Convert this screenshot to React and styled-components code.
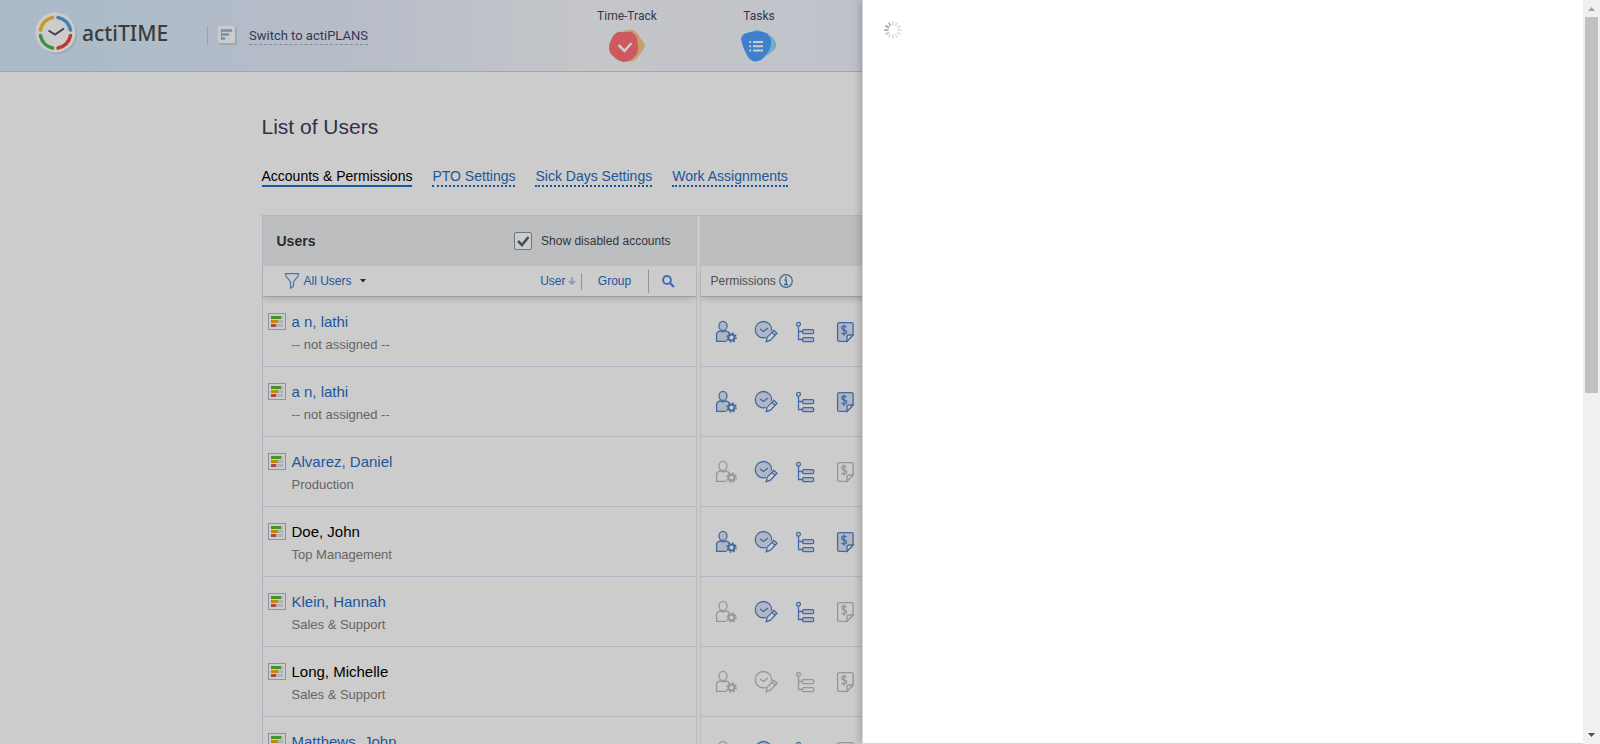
import React from "react";
import styled, { createGlobalStyle, css } from "styled-components";

const Global = createGlobalStyle`
  * { box-sizing: border-box; }
  body { margin: 0; background: #fff; font-family: "Liberation Sans", Arial, sans-serif; }
  button { font: inherit; background: none; border: 0; padding: 0; cursor: pointer; }
  a { text-decoration: none; }
`;

const Shell = styled.div`
  display: flex;
  height: 100vh;
  overflow: hidden;
`;

const Viewport = styled.div`
  position: relative;
  flex: 1;
  min-width: 0;
  overflow: hidden;
`;

const Header = styled.header`
  display: flex;
  height: 72px;
  padding-left: 35px;
  border-bottom: 1px solid #bdd3ea;
  background: linear-gradient(90deg, #d4e9fc 0, #e8eefa 400px, #f6f8fc 590px, #f0f3fe 863px);
`;

const Logo = styled.a`
  display: flex;
  align-items: center;
  gap: 5px;
  width: 172px;
  height: 66px;
  color: #484b4d;
  font: 500 21px/30px "Noto Sans", sans-serif;
`;

const Switcher = styled.div`
  display: flex;
  align-items: center;
  gap: 12px;
  height: 19px;
  margin-top: 26px;
  padding-left: 10px;
  border-left: 1px solid #b5cfee;
`;

const SwitchLink = styled.a`
  border-bottom: 1px dashed #a0b0c2;
  color: #45486a;
  font: 13px/17px Roboto, sans-serif;
`;

const Nav = styled.nav`
  display: flex;
  margin-left: 193px;
`;

const NavItem = styled.a`
  display: flex;
  flex-direction: column;
  align-items: center;
  gap: 6px;
  width: 132px;
  padding-top: 8px;
  color: #44475c;
  font: 12px/16px Roboto, sans-serif;
`;

const Content = styled.main`
  max-width: 1060px;
  margin: 0 auto;
`;

const Title = styled.h1`
  margin: 0;
  padding-top: 40px;
  color: #3a4158;
  font-size: 21px;
  font-weight: 400;
  line-height: 30px;
`;

const Tabs = styled.nav`
  display: flex;
  gap: 20px;
  padding-top: 25px;
`;

const Tab = styled.a`
  border-bottom: 2px ${(p) => (p.$active ? "solid" : "dotted")} #1f6fc4;
  color: ${(p) => (p.$active ? "#000" : "#2a6cc0")};
  font-size: 14px;
  line-height: 18px;
`;

const Columns = styled.div`
  display: flex;
  margin-top: 28px;
  border-top: 1px solid #dbe4f2;
`;

const Pane = styled.section`
  ${(p) => (p.$grow ? css`flex: 1; min-width: 0;` : css`flex: 0 0 435px; border-left: 1px solid #dbe4f2; border-right: 1px solid #e6e9ee;`)}
`;

const Splitter = styled.div`
  flex: 0 0 4px;
  border-right: 1px solid #e8e9ec;
`;

const PaneHead = styled.div`
  display: flex;
  align-items: center;
  justify-content: space-between;
  height: 50px;
  padding: 0 25px 0 14px;
  background: #ebeef0;
  color: #33373b;
`;

const PaneTitle = styled.h2`
  margin: 0;
  font-size: 14px;
  line-height: 18px;
`;

const CheckLabel = styled.label`
  display: flex;
  align-items: center;
  gap: 9px;
  color: #444;
  font-size: 12px;
  line-height: 18px;
`;

const Check = styled.input`
  appearance: none;
  width: 18px;
  height: 18px;
  margin: 0;
  border: 1px solid #8794aa;
  border-radius: 2px;
  background: #fff;
`;

const CheckBox = styled.span`
  display: grid;
  > * { grid-area: 1 / 1; }
  > svg { pointer-events: none; }
`;

const ToolRow = styled.div`
  display: flex;
  align-items: center;
  height: 31px;
  padding-left: ${(p) => (p.$wide ? "22px" : "10px")};
  border-bottom: 1px solid #c7c9cc;
  box-shadow: 0 4px 6px -2px rgba(0, 0, 0, 0.16);
  color: #666;
  font-size: 12px;
  gap: 3px;
`;

const FilterButton = styled.button`
  display: flex;
  align-items: center;
  gap: 5px;
  flex: 1;
  color: #2a6cc0;
  font-size: 12px;
`;

const SortButton = styled.button`
  display: flex;
  align-items: center;
  justify-content: ${(p) => (p.$center ? "center" : "flex-end")};
  gap: 2px;
  width: ${(p) => p.$w};
  height: ${(p) => p.$h};
  padding-right: ${(p) => (p.$center ? 0 : "5px")};
  border-right: ${(p) => (p.$last ? 0 : "1px solid #b8babd")};
  color: #2a6cc0;
  font-size: 12px;
`;

const SortGroup = styled.div`
  display: flex;
  align-items: center;
  padding-right: 8px;
`;

const List = styled.ul`
  margin: 0;
  padding: 0;
  list-style: none;
`;

const UserRow = styled.li`
  display: flex;
  gap: 6px;
  height: 70px;
  padding: 15px 0 0 5px;
  border-bottom: 1px solid #dde8f4;
`;

const RowIcon = styled.span`
  display: flex;
  padding-top: 1px;
`;

const UserName = styled.a`
  display: block;
  color: ${(p) => (p.$self ? "#000" : "#2a6cc0")};
  font-size: 15px;
  line-height: 20px;
`;

const UserGroup = styled.div`
  padding-top: 4px;
  color: #808080;
  font-size: 13px;
  line-height: 18px;
`;

const PermRow = styled.li`
  display: flex;
  align-items: center;
  gap: 12px;
  height: 70px;
  padding-left: 11px;
  border-bottom: 1px solid #dde8f4;
`;

const PermButton = styled.button`
  display: flex;
  color: ${(p) => (p.$on ? "#5484cc" : "#bcbcbc")};
  --tint: ${(p) => (p.$on ? "#dbe4f5" : "none")};
`;

const Shade = styled.div`
  position: absolute;
  inset: 0;
  background: rgba(0, 0, 0, 0.2);
`;

const Drawer = styled.aside`
  position: absolute;
  top: 0;
  right: 0;
  bottom: 0;
  width: 721px;
  padding: 21px;
  border-left: 1px solid #d8d8d8;
  border-bottom: 1px solid #d4d6da;
  background: #fff;
  box-shadow: 0 0 10px rgba(0, 0, 0, 0.3);
`;

const Scrollbar = styled.div`
  display: flex;
  flex-direction: column;
  align-items: center;
  justify-content: space-between;
  flex: 0 0 17px;
  background: #f0f0f0;
`;

const Thumb = styled.div`
  width: 13px;
  height: 53%;
  background: #c1c1c1;
`;

const Track = styled.div`
  flex: 1;
  min-height: 0;
`;

const ArrowUp = () => (
  <svg width="17" height="17"><path d="M5 11h7L8.500 7z" fill="#a3a3a3" /></svg>
);
const ArrowDown = () => (
  <svg width="17" height="17"><path d="M5 6h7L8.500 10z" fill="#505050" /></svg>
);

const LogoMark = () => (
  <svg width="42" height="42" viewBox="0 0 42 42" fill="none">
    <circle cx="22" cy="22" r="20" fill="#c3d5ea" />
    <circle cx="20.500" cy="20.500" r="20" fill="#fff" />
    <g strokeWidth="3.600" strokeLinecap="round">
      <path d="M23 5.500A15.500 15.500 0 0 1 35.500 18" stroke="#5aa2dc" />
      <path d="M35.500 23.500A15.500 15.500 0 0 1 23 36" stroke="#ea4b3c" />
      <path d="M17.500 36A15.500 15.500 0 0 1 5.500 23.500" stroke="#52b15c" />
      <path d="M5.500 18A15.500 15.500 0 0 1 17.500 5.500" stroke="#f4c236" />
    </g>
    <path d="M13.500 18.500l6.500 4 9-6" stroke="#50566a" strokeWidth="2" />
  </svg>
);

const PlansMark = () => (
  <svg width="19" height="19" viewBox="0 0 19 19">
    <rect x="1" y="1" width="18" height="18" rx="2" fill="#c5d5e8" />
    <rect width="17" height="17" rx="2" fill="#fff" />
    <path d="M4 4.500h9M4 8.500h6M4 12.500h2" stroke="#8fb4d8" strokeWidth="2.600" strokeLinecap="round" />
    <path d="M3.500 3v11" stroke="#8fb4d8" />
  </svg>
);

const TrackMark = () => (
  <svg width="36" height="32" viewBox="0 0 36 32">
    <path d="M15 1Q22-2 27 2Q30 5 32 9Q38 15 34 20L29 27Q25 33 18 31L12 25V6z" fill="#fcc68a" />
    <path d="M7 3Q10 1 15 2H21Q26 3 28 8L29 16Q30 20 27 25Q22 32 14 32Q9 31 5 27Q0 23 0 18Q0 14 2 10Q4 5 7 3z" fill="#ff6f78" />
    <path d="M9.500 15l6 6 7-8" fill="none" stroke="#fff" strokeWidth="2.500" />
  </svg>
);

const TasksMark = () => (
  <svg width="36" height="32" viewBox="0 0 36 32">
    <path d="M12 1Q16-1 20 1L31 7Q39 15 32 21L21 29Q14 30 12 23z" fill="#87dcff" />
    <path d="M3 4Q12 0 22 2Q31 4 30 14Q29 22 20 30Q12 34 7 27Q2 19 0 9Q0 6 3 4z" fill="#4ea0ff" />
    <path d="M12 12h10M12 16.300h10M12 20.600h10M8.300 12h1.800M8.300 16.300h1.800M8.300 20.600h1.800" stroke="#fff" strokeWidth="2" />
  </svg>
);

const CheckMark = () => (
  <svg width="18" height="18" viewBox="0 0 18 18"><path d="M4 9l4 4 6.500-8" fill="none" stroke="#5b6670" strokeWidth="2.600" /></svg>
);
const Funnel = () => (
  <svg width="14" height="16" viewBox="0 0 14 16"><path d="M.6.6h12.800v2L8.500 9v4L5.500 15.300V9L.6 2.600z" fill="none" stroke="#5b8fdd" strokeWidth="1.200" /></svg>
);
const Caret = () => (
  <svg width="11" height="4" viewBox="0 0 11 4"><path d="M3 0h6L6 3.500z" fill="#333" /></svg>
);
const SortArrow = () => (
  <svg width="8" height="8" viewBox="0 0 8 8"><path d="M4 0v7M.8 4L4 7l3.200-3" fill="none" stroke="#a9bdd8" strokeWidth="1.600" /></svg>
);
const Magnifier = () => (
  <svg width="13" height="13" viewBox="0 0 13 13" fill="none" stroke="#568be0" strokeWidth="2"><circle cx="5" cy="5" r="3.900" /><path d="M8 8l4 4" strokeWidth="2.400" /></svg>
);
const Info = () => (
  <svg width="14" height="14" viewBox="0 0 14 14" fill="none" stroke="#4f83b6"><circle cx="7" cy="7" r="6.300" strokeWidth="1.200" /><path d="M5.300 6h2v4.500M5 10.500h4" strokeWidth="1.300" /><path d="M6.200 3.700h1.700" strokeWidth="1.800" /></svg>
);
const Bars = () => (
  <svg width="18" height="17" viewBox="0 0 18 17">
    <rect x=".5" y=".5" width="17" height="16" fill="#fff" stroke="#b3b8bd" />
    <path d="M3 4.500h12M3 8.500h12M3 12.500h12" stroke="#dcdfe3" strokeWidth="3" />
    <path d="M3 4.500h10" stroke="#58b83a" strokeWidth="3" />
    <path d="M3 8.500h7" stroke="#eeb000" strokeWidth="3" />
    <path d="M3 12.500h5" stroke="#e0555f" strokeWidth="3" />
  </svg>
);

const Svg = ({ children }) => (
  <svg width="28" height="24" viewBox="0 0 28 24" fill="none" stroke="currentColor" strokeWidth="1.300">{children}</svg>
);
const PersonIcon = () => (
  <Svg>
    <path d="M14.500 21.400H4.600V14Q4.600 12 8 10.800Q11 13 14 10.800Q17 11.600 17.400 13.500" fill="var(--tint)" />
    <ellipse cx="11" cy="5.900" rx="4" ry="4.600" fill="var(--tint)" />
    <circle cx="19.500" cy="17.500" r="3.100" strokeWidth="2" />
    <circle cx="19.500" cy="17.500" r="4.600" strokeWidth="1.500" strokeDasharray="1.700 1.913" />
  </Svg>
);
const ClockIcon = () => (
  <Svg>
    <circle cx="11.500" cy="9.700" r="8.200" fill="var(--tint)" />
    <path d="M8 9l3.500 2.400L16 8" />
    <path d="M14.500 21.700l1-4.700 6.300-6.500 3 2.800-6.500 6.800zM20 12.300l3 2.800" stroke="#fff" strokeWidth="3" />
    <path d="M14.200 21.700l1-4.700 6.600-6.500 3.200 2.800-6.500 6.800zM19.800 12.300l3.200 2.800" fill="#fff" />
  </Svg>
);
const TreeIcon = () => (
  <Svg>
    <circle cx="6.500" cy="4.300" r="1.900" />
    <path d="M6.500 6.200V19.500H10.500M6.500 11.500H10.500" />
    <rect x="10.600" y="9.600" width="11" height="4" rx="1" fill="var(--tint)" />
    <rect x="10.600" y="17.600" width="11" height="4" rx="1" fill="var(--tint)" />
  </Svg>
);
const MoneyIcon = () => (
  <Svg>
    <path d="M7.600 2.600h12q1.500 0 1.500 1.500V15L15 21.400H7.100q-1.500 0-1.500-1.500V4.100q0-1.500 2-1.500z" fill="var(--tint)" />
    <path d="M15 21.400V17q0-2 2-2h4.100z" fill="#fff" />
    <path d="M14.500 7.200Q13.500 6.200 12 6.200Q9.800 6.200 9.800 8Q9.800 9.500 12 10Q14.600 10.500 14.600 12.200Q14.500 14 12 14Q10.300 14 9.400 12.800M12 4.500v11.300" />
  </Svg>
);

const Spinner = () => (
  <svg width="18" height="18" viewBox="-9 -9 18 18" strokeWidth="2" role="img" aria-label="Loading">
    {Array.from({ length: 12 }, (_, i) => (
      <path key={i} d="M0-4.500V-8.800" transform={`rotate(${i * 30})`} stroke={i > 7 ? ["#ccc", "#b5b5b5", "#a5a5a5", "#bbb"][i - 8] : "#e2e2e2"} />
    ))}
  </svg>
);

const permissions = [
  ["Manage accounts", PersonIcon],
  ["Modify time-track", ClockIcon],
  ["Manage scope of work", TreeIcon],
  ["Manage billing", MoneyIcon],
];

const users = [
  { name: "a n, lathi", group: "-- not assigned --", on: [1, 1, 1, 1] },
  { name: "a n, lathi", group: "-- not assigned --", on: [1, 1, 1, 1] },
  { name: "Alvarez, Daniel", group: "Production", on: [0, 1, 1, 0] },
  { name: "Doe, John", group: "Top Management", self: true, on: [1, 1, 1, 1] },
  { name: "Klein, Hannah", group: "Sales & Support", on: [0, 1, 1, 0] },
  { name: "Long, Michelle", group: "Sales & Support", self: true, on: [0, 0, 0, 0] },
  { name: "Matthews, John", group: "", on: [0, 1, 1, 0] },
];

export default function App() {
  return (
    <Shell>
      <Global />
      <Viewport>
        <Header>
          <Logo href="#home"><LogoMark />actiTIME</Logo>
          <Switcher>
            <PlansMark />
            <SwitchLink href="#plans">Switch to actiPLANS</SwitchLink>
          </Switcher>
          <Nav>
            <NavItem href="#track">Time-Track<TrackMark /></NavItem>
            <NavItem href="#tasks">Tasks<TasksMark /></NavItem>
          </Nav>
        </Header>
        <Content>
          <Title>List of Users</Title>
          <Tabs>
            <Tab href="#accounts" $active>Accounts &amp; Permissions</Tab>
            <Tab href="#pto">PTO Settings</Tab>
            <Tab href="#sick">Sick Days Settings</Tab>
            <Tab href="#work">Work Assignments</Tab>
          </Tabs>
          <Columns>
            <Pane>
              <PaneHead>
                <PaneTitle>Users</PaneTitle>
                <CheckLabel>
                  <CheckBox><Check type="checkbox" defaultChecked /><CheckMark /></CheckBox>
                  Show disabled accounts
                </CheckLabel>
              </PaneHead>
              <ToolRow $wide>
                <FilterButton><Funnel />All Users<Caret /></FilterButton>
                <SortGroup>
                  <SortButton $w="48px" $h="17px">User<SortArrow /></SortButton>
                  <SortButton $w="67px" $h="23px" $center>Group</SortButton>
                  <SortButton $w="39px" $h="23px" $center $last aria-label="Search"><Magnifier /></SortButton>
                </SortGroup>
              </ToolRow>
              <List>
                {users.map((u, i) => (
                  <UserRow key={i}>
                    <RowIcon><Bars /></RowIcon>
                    <div>
                      <UserName href="#user" $self={u.self}>{u.name}</UserName>
                      <UserGroup>{u.group}</UserGroup>
                    </div>
                  </UserRow>
                ))}
              </List>
            </Pane>
            <Splitter />
            <Pane $grow>
              <PaneHead />
              <ToolRow>Permissions<Info /></ToolRow>
              <List>
                {users.map((u, i) => (
                  <PermRow key={i}>
                    {permissions.map(([label, Icon], k) => (
                      <PermButton key={label} aria-label={label} $on={!!u.on[k]}><Icon /></PermButton>
                    ))}
                  </PermRow>
                ))}
              </List>
            </Pane>
          </Columns>
        </Content>
        <Shade />
        <Drawer><Spinner /></Drawer>
      </Viewport>
      <Scrollbar aria-hidden="true">
        <ArrowUp />
        <Track><Thumb /></Track>
        <ArrowDown />
      </Scrollbar>
    </Shell>
  );
}
